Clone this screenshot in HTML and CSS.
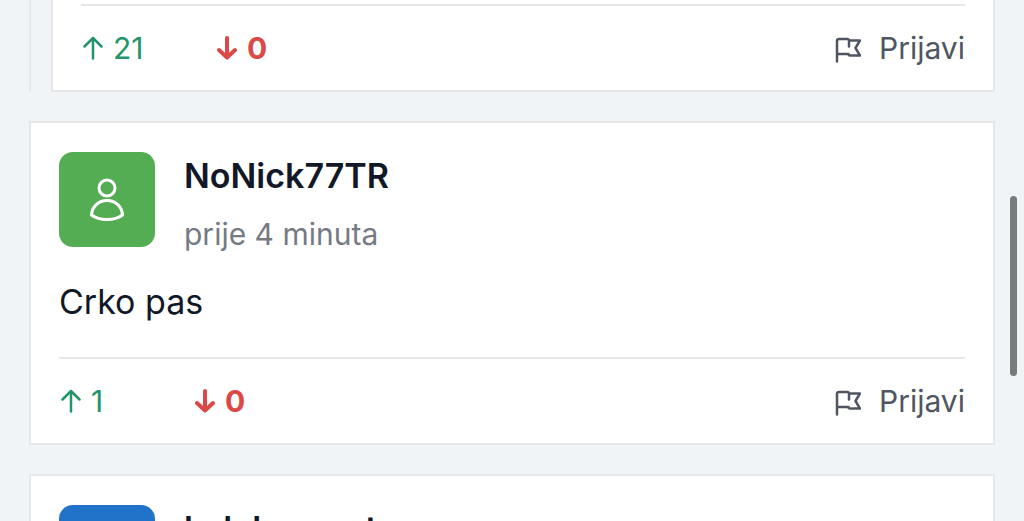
FILE: index.html
```html
<!DOCTYPE html>
<html lang="bs">
<head>
    <meta charset="UTF-8">
    <meta name="viewport" content="width=device-width, initial-scale=1.0">
    <title>Komentari</title>
    <link rel="stylesheet" href="styles.css">
</head>
<body>
    <svg class="sprite" aria-hidden="true">
        <symbol id="arrow-up" viewBox="0 0 20 24">
            <path d="M10 22.5V2M1.500 10.500L10 2l8.500 8.500"/>
        </symbol>
        <symbol id="arrow-down" viewBox="0 0 20 24">
            <path d="M10 2V21M2 14l8 7.500L18 14"/>
        </symbol>
        <symbol id="flag" viewBox="0 0 26 26">
            <path d="M2 24.500V4a2 2 0 0 1 2-2h8.500a1.500 1.500 0 0 1 1.500 1.500H25l-4.500 7.500L25 18.500H15a1.500 1.500 0 0 1-1.500-1.500H2M14 3.500V9.500"/>
        </symbol>
        <symbol id="user" viewBox="0 0 36 44">
            <circle cx="18" cy="10" r="8"/>
            <path d="M18 22.500c8.500 0 15 6 15.500 14.500C29 40.500 23.500 41.500 18 41.500S7 40.500 2.500 37C3 28.500 9.500 22.500 18 22.500z"/>
        </symbol>
    </svg>

    <main class="comments">
        <div class="thread">
            <article class="comment comment-reply">
                <footer class="comment-footer">
                    <button class="vote vote-up" type="button"><svg class="arrow"><use href="#arrow-up"/></svg>21</button>
                    <button class="vote vote-down" type="button"><svg class="arrow"><use href="#arrow-down"/></svg>0</button>
                    <button class="report" type="button"><svg class="flag"><use href="#flag"/></svg>Prijavi</button>
                </footer>
            </article>
        </div>

        <article class="comment">
            <header class="comment-header">
                <div class="avatar avatar-green"><svg class="user"><use href="#user"/></svg></div>
                <div class="author">
                    <a class="author-name" href="#">NoNick77TR</a>
                    <time class="author-time">prije 4 minuta</time>
                </div>
            </header>
            <p class="comment-text">Crko pas</p>
            <footer class="comment-footer">
                <button class="vote vote-up" type="button"><svg class="arrow"><use href="#arrow-up"/></svg>1</button>
                <button class="vote vote-down" type="button"><svg class="arrow"><use href="#arrow-down"/></svg>0</button>
                <button class="report" type="button"><svg class="flag"><use href="#flag"/></svg>Prijavi</button>
            </footer>
        </article>

        <article class="comment">
            <header class="comment-header">
                <div class="avatar avatar-blue"></div>
                <div class="author">
                    <a class="author-name" href="#">kolekonerat</a>
                </div>
            </header>
        </article>
    </main>
    <div class="scroll-thumb"></div>
</body>
</html>
```

FILE: styles.css
```css
* {
    box-sizing: border-box;
}
body {
    margin: 0;
    height: 100vh;
    overflow: hidden;
    background: #f0f4f6;
    color: #111827;
    font-family: Inter, "Liberation Sans", sans-serif;
}
.sprite {
    display: none;
}
svg {
    fill: none;
    stroke: currentColor;
    stroke-linecap: round;
    stroke-linejoin: round;
}
.comments {
    display: flex;
    flex-direction: column;
    gap: 29px;
    padding: 0 29px;
}
.thread {
    padding-left: 20px;
    border-left: 2px solid #e5e7e9;
}
.comment {
    padding: 29px 28px 0;
    background: #fff;
    border: 2px solid #e5e7e9;
}
.comment-reply {
    padding-top: 4px;
    border-top: 0;
}

/* header */
.comment-header {
    display: flex;
    gap: 29px;
}
.avatar {
    display: flex;
    align-items: center;
    justify-content: center;
    width: 96px;
    height: 95px;
    border-radius: 14px;
    color: #fff;
}
.avatar-green {
    background: #55ad53;
}
.avatar-blue {
    background: #2173c9;
}
.user {
    width: 36px;
    height: 44px;
    stroke-width: 3;
}
.author {
    display: flex;
    flex-direction: column;
    gap: 10px;
}
.author-name {
    color: inherit;
    font-size: 34px;
    font-weight: 600;
    line-height: 48px;
    text-decoration: none;
}
.author-time {
    color: #757a84;
    font-size: 30px;
    line-height: 48px;
}
.comment-text {
    margin: 0;
    padding: 14px 0 26px;
    font-size: 34px;
    line-height: 59px;
}

/* votes and report */
.comment-footer {
    display: flex;
    align-items: center;
    height: 86px;
    border-top: 2px solid #e5e7e9;
}
button {
    display: flex;
    align-items: center;
    padding: 0;
    border: 0;
    background: none;
    font-family: inherit;
    font-size: 30px;
    line-height: 40px;
    cursor: pointer;
}
.vote {
    gap: 10px;
    width: 134px;
    padding-left: 2px;
}
.vote-up {
    color: #23946b;
}
.vote-down {
    color: #dc4846;
    font-weight: 700;
}
.arrow {
    width: 20px;
    height: 24px;
    stroke-width: 2.5;
}
.vote-down .arrow {
    stroke-width: 4;
}
.report {
    gap: 18px;
    margin-left: auto;
    color: #4f5661;
}
.flag {
    width: 26px;
    height: 26px;
    margin-top: 4px;
    stroke-width: 2.5;
}

.scroll-thumb {
    position: fixed;
    top: 196px;
    right: 7px;
    width: 7px;
    height: 180px;
    border-radius: 4px;
    background: #777b7c;
}
```
